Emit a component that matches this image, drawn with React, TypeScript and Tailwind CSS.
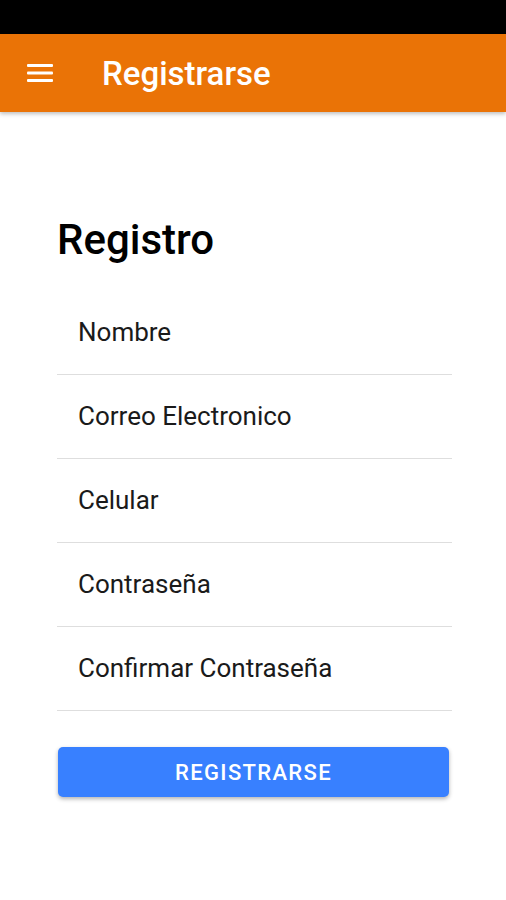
import React from 'react';

const campos = ['Nombre', 'Correo Electronico', 'Celular', 'Contraseña', 'Confirmar Contraseña'];

const MenuIcon = () => (
    <svg width="26" height="18" viewBox="0 0 26 18" fill="none">
        <rect x="0" y="0" width="26" height="3" rx="1" fill="white" />
        <rect x="0" y="7.5" width="26" height="3" rx="1" fill="white" />
        <rect x="0" y="15" width="26" height="3" rx="1" fill="white" />
    </svg>
);

export default function App() {
    return (
        <div className="min-h-[900px] bg-white" style={{ fontFamily: 'Roboto, "Noto Sans", sans-serif' }}>
            {/* barra de estado */}
            <div className="h-[34px] bg-black" />

            {/* cabecera */}
            <header className="h-[78px] bg-[#ea7306] flex items-center shadow-[0_2px_4px_rgba(0,0,0,0.25)] relative">
                <div className="pl-[27px] pr-[49px] flex items-center">
                    <MenuIcon />
                </div>
                <h1 className="text-white text-[33px] font-medium leading-none">Registrarse</h1>
            </header>

            <main className="pl-[57px] pr-[54px] pt-[104px]">
                <h2 className="text-[42px] leading-[48px] text-black font-medium">Registro</h2>

                <div className="mt-[27px]">
                    {campos.map((campo) => (
                        <div
                            key={campo}
                            className="h-[84px] flex items-center pl-[21px] border-b border-[#dedede]"
                        >
                            <span className="text-[26px] text-[#1a1a1a]">{campo}</span>
                        </div>
                    ))}
                </div>

                <button className="mt-[36px] ml-px w-[391px] h-[50px] rounded-[5px] bg-[#3880ff] text-white text-[22px] font-medium tracking-[0.06em] shadow-[0_2px_4px_rgba(0,0,0,0.3)]">
                    REGISTRARSE
                </button>
            </main>
        </div>
    );
}
